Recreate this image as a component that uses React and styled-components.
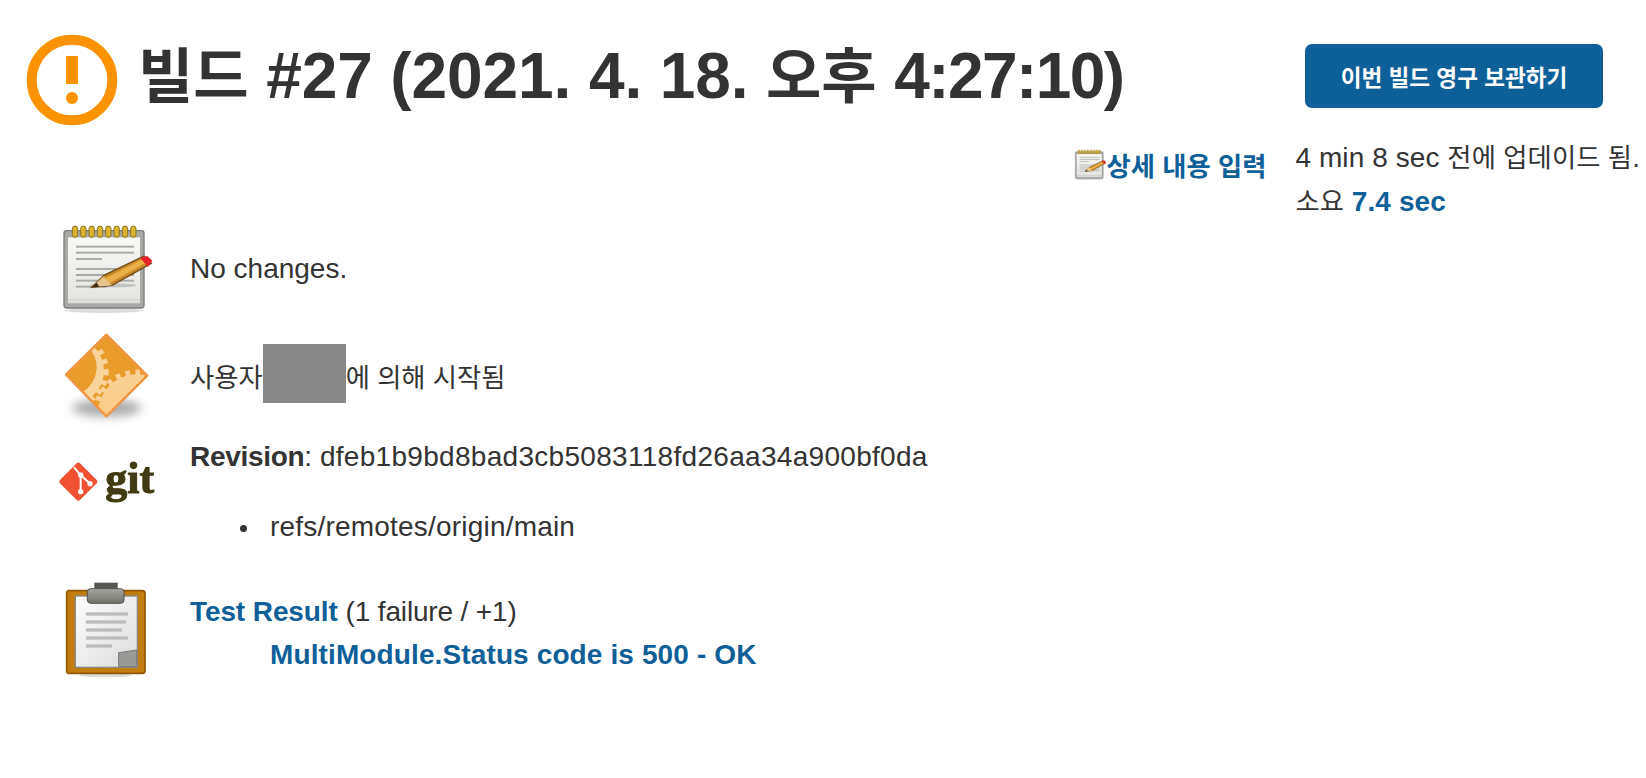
import React from 'react'
import styled, { createGlobalStyle } from 'styled-components'

const GlobalStyle = createGlobalStyle`
	html, body {
		margin: 0;
		padding: 0;
		background: #fff;
	}
	body {
		font-family: 'Liberation Sans', 'Noto Sans CJK KR', sans-serif;
		color: #333;
	}
`

const blue = '#0f5f99'

const WarningIcon = () => (
	<svg width="92" height="92" viewBox="0 0 92 92">
		<circle cx="46" cy="46" r="40.3" fill="none" stroke="#ff9200" strokeWidth="10" />
		<rect x="40" y="22" width="12" height="28" fill="#ff9200" />
		<circle cx="46" cy="64" r="6" fill="#ff9200" />
	</svg>
)

const Soft = () => (
	<defs>
		<filter id="soft" x="-10%" y="-10%" width="120%" height="120%">
			<feGaussianBlur stdDeviation="2" />
		</filter>
		<filter id="shadow" x="-30%" y="-80%" width="160%" height="260%">
			<feGaussianBlur stdDeviation="14" />
		</filter>
		<linearGradient id="clip" x1="0" y1="0" x2="0" y2="1">
			<stop offset="0" stopColor="#a5a69f" />
			<stop offset="1" stopColor="#6f716b" />
		</linearGradient>
		<linearGradient id="paper" x1="0" y1="0" x2="1" y2="1">
			<stop offset="0" stopColor="#fdfdfd" />
			<stop offset="1" stopColor="#dcdcdc" />
		</linearGradient>
		<linearGradient id="gear" x1="0" y1="0" x2="0" y2="1">
			<stop offset="0" stopColor="#f9d095" />
			<stop offset="1" stopColor="#fcc77c" />
		</linearGradient>
		<linearGradient id="pad" x1="0" y1="0" x2="0" y2="1">
			<stop offset="0" stopColor="#f8f8f7" />
			<stop offset="1" stopColor="#e4e4e2" />
		</linearGradient>
		<clipPath id="diamond">
			<polygon points="199,20 322,143 199,265 78,140" />
		</clipPath>
	</defs>
)

const NotepadArt = () => (
	<g filter="url(#soft)">
		<ellipse cx="192" cy="302" rx="118" ry="7" fill="#ddd" />
		<rect x="72" y="62" width="240" height="232" rx="8" fill="#a9aaa6" stroke="#7c7c7c" strokeWidth="4" />
		<rect x="84" y="82" width="216" height="186" fill="url(#pad)" />
		<rect x="84" y="268" width="216" height="12" fill="#dededc" />
		{[105, 130, 155, 180, 205, 230, 255, 280].map(x => (
			<rect key={x} x={x - 8} y="48" width="16" height="34" rx="8" fill="#d9b32f" stroke="#8b7420" strokeWidth="3" />
		))}
		{[[110, 282], [128, 282], [147, 186], [177, 282], [195, 282], [212, 282], [230, 200]].map(([y, x2]) => (
			<rect key={y} x="108" y={y - 3} width={x2 - 108} height="6" fill="#aaaaa8" />
		))}
		<ellipse cx="220" cy="226" rx="70" ry="6" fill="#999" opacity="0.5" />
		<polygon points="155,232 192,196 312,138 334,160 216,226" fill="#c98a2c" stroke="#6f4a17" strokeWidth="4" />
		<polygon points="195,206 310,146 318,158 210,218" fill="#eab04a" />
		<polygon points="155,232 190,199 216,226" fill="#e8c48c" />
		<polygon points="155,232 170,218 178,230" fill="#3a2a14" />
		<polygon points="300,143 322,138 337,152 324,171" fill="#e8242c" />
	</g>
)

const NotepadIcon = () => (
	<svg width="130" height="110" viewBox="0 0 390 330">
		<Soft />
		<NotepadArt />
	</svg>
)

const SmallNotepad = () => (
	<svg width="33" height="31" viewBox="60 40 285 265">
		<Soft />
		<NotepadArt />
	</svg>
)

const GearIcon = () => (
	<svg width="130" height="110" viewBox="0 0 390 330">
		<Soft />
		<ellipse cx="200" cy="240" rx="104" ry="26" fill="#888" opacity="0.7" filter="url(#shadow)" />
		<g filter="url(#soft)">
			<g clipPath="url(#diamond)">
				<rect x="70" y="10" width="260" height="260" fill="#e89c2c" />
				<circle cx="92" cy="128" r="100" fill="#f9d59d" />
				<circle cx="92" cy="128" r="106" fill="none" stroke="#f9d59d" strokeWidth="16" strokeDasharray="14 16" />
				<circle cx="84" cy="118" r="86" fill="#e89c2c" />
				<circle cx="290" cy="255" r="116" fill="url(#gear)" />
				<circle cx="290" cy="255" r="122" fill="none" stroke="#fad197" strokeWidth="16" strokeDasharray="14 16" />
			</g>
			<polygon points="199,20 322,143 199,265 78,140" fill="none" stroke="#f29542" strokeWidth="7" strokeLinejoin="round" />
		</g>
	</svg>
)

const GitIcon = () => (
	<svg width="130" height="70" viewBox="0 0 390 210">
		<defs>
			<filter id="softGit">
				<feGaussianBlur stdDeviation="1.8" />
			</filter>
		</defs>
		<g filter="url(#softGit)">
			<rect x="72.5" y="82.5" width="85" height="85" rx="8" fill="#f05133" transform="rotate(45 115 125)" />
			<path d="M102 82 L122 105 V155 M122 105 L150 131" stroke="#fff" strokeWidth="6" fill="none" />
			<circle cx="122" cy="105" r="8" fill="#fff" />
			<circle cx="122" cy="155" r="8" fill="#fff" />
			<circle cx="150" cy="131" r="8" fill="#fff" />
			<text x="196" y="160" fontFamily="'Liberation Serif', serif" fontWeight="700" fontSize="132" fill="#413a12" stroke="#413a12" strokeWidth="3">git</text>
		</g>
	</svg>
)

const ClipboardIcon = () => (
	<svg width="130" height="120" viewBox="0 0 390 360">
		<Soft />
		<g filter="url(#soft)">
			<ellipse cx="196" cy="322" rx="80" ry="6" fill="#ddd" />
			<rect x="80" y="68" width="235" height="248" rx="8" fill="#c17d11" stroke="#8f5902" strokeWidth="5" />
			<rect x="106" y="84" width="186" height="214" fill="url(#paper)" stroke="#8a8a86" strokeWidth="4" />
			{[[138, 264], [162, 258], [186, 246], [210, 264], [234, 216]].map(([y, x2]) => (
				<rect key={y} x="138" y={y - 5} width={x2 - 138} height="10" fill="#bdbdbb" />
			))}
			<polygon points="236,254 290,246 290,296 236,296" fill="#999a96" stroke="#777" strokeWidth="3" />
			<rect x="163" y="44" width="70" height="22" fill="#55574f" />
			<rect x="142" y="62" width="110" height="44" rx="10" fill="url(#clip)" stroke="#555753" strokeWidth="3" />
		</g>
	</svg>
)

const App = () => (
	<Page>
		<GlobalStyle />
		<Header>
			<HeaderIcon>
				<WarningIcon />
			</HeaderIcon>
			<Title>
				<Ko>빌드</Ko> #27 (2021. 4. 18. <Ko>오후</Ko> <Clock>4:27:10)</Clock>
			</Title>
			<KeepButton>이번 빌드 영구 보관하기</KeepButton>
		</Header>
		<MetaRow>
			<EditLink>
				<SmallNotepad />
				<Ko>상세 내용 입력</Ko>
			</EditLink>
			<Meta>
				<div>
					4 min 8 sec <Ko>전에 업데이드 됨</Ko>.
				</div>
				<div>
					<Ko>소요</Ko> <Strong>7.4 sec</Strong>
				</div>
			</Meta>
		</MetaRow>
		<Rows>
			<Row>
				<NotepadIcon />
				<Cell offset={37}>No changes.</Cell>
			</Row>
			<Row gap={8}>
				<GearIcon />
				<Cell offset={28}>
					<Ko>사용자</Ko>
					<Redacted />
					<Ko>에 의해 시작됨</Ko>
				</Cell>
			</Row>
			<Row gap={2}>
				<GitIcon />
				<Cell offset={-5}>
					<RevisionLabel>Revision</RevisionLabel>: <Hash>dfeb1b9bd8bad3cb5083118fd26aa34a900bf0da</Hash>
					<BranchList>
						<Branch>refs/remotes/origin/main</Branch>
					</BranchList>
				</Cell>
			</Row>
			<Row gap={19}>
				<ClipboardIcon />
				<Cell offset={22}>
					<TestLink>Test Result</TestLink> <TestCount>(1 failure / +1)</TestCount>
					<FailedTest>MultiModule.Status code is 500 - OK</FailedTest>
				</Cell>
			</Row>
		</Rows>
	</Page>
)

export default App

const Page = styled.div`
	width: 1646px;
	height: 778px;
	overflow: hidden;
	background: #fff;
`

const Ko = styled.span`
	font-size: 0.94em;
`

const Header = styled.div`
	display: flex;
	align-items: flex-start;
	height: 136px;
	padding: 34px 43px 0 26px;
	box-sizing: border-box;
`

const HeaderIcon = styled.div`
	flex: none;
	width: 112px;
	height: 92px;
`

const Title = styled.h1`
	flex: 1;
	margin: 0;
	font-size: 64px;
	line-height: 84px;
	font-weight: 700;
	color: #333;
	white-space: nowrap;
	letter-spacing: -0.1px;
`

const Clock = styled.span`
	letter-spacing: -1.6px;
`

const KeepButton = styled.button`
	flex: none;
	width: 298px;
	height: 64px;
	margin-top: 10px;
	border: 0;
	border-radius: 7px;
	background: ${blue};
	color: #fff;
	font-family: inherit;
	font-size: 22.6px;
	font-weight: 700;
`

const MetaRow = styled.div`
	display: flex;
	justify-content: flex-end;
	gap: 29px;
	height: 74px;
	padding-right: 6px;
`

const EditLink = styled.a`
	display: flex;
	align-items: center;
	align-self: flex-start;
	height: 46px;
	margin-top: 5px;
	color: ${blue};
	font-size: 28px;
	font-weight: 700;
`

const Meta = styled.div`
	font-size: 28px;
	line-height: 44px;
	white-space: nowrap;
	letter-spacing: 0.08px;
`

const Strong = styled.a`
	color: ${blue};
	font-weight: 700;
`

const Rows = styled.div`
	display: flex;
	flex-direction: column;
`

const Row = styled.div`
	display: flex;
	gap: 20px;
	align-items: flex-start;
	padding-left: 40px;
	margin-top: ${props => props.gap || 0}px;
	font-size: 28px;
	line-height: 44px;
`

const Cell = styled.div`
	margin-top: ${props => props.offset}px;
`

const RevisionLabel = styled.b`
	letter-spacing: -0.3px;
`

const Hash = styled.span`
	letter-spacing: 0.3px;
`

const Redacted = styled.span`
	display: inline-block;
	width: 83px;
	height: 59px;
	margin: -14px 0 -2px;
	background: #888;
	vertical-align: middle;
`

const BranchList = styled.ul`
	margin: 26px 0 0;
	padding: 0 0 0 80px;
	list-style: none;
	letter-spacing: 0.2px;
`

const Branch = styled.li`
	position: relative;

	&::before {
		content: '';
		position: absolute;
		left: -30px;
		top: 20px;
		width: 7px;
		height: 7px;
		border-radius: 50%;
		background: #333;
	}
`

const TestLink = styled.a`
	color: ${blue};
	font-weight: 700;
	letter-spacing: -0.1px;
`

const TestCount = styled.span`
	letter-spacing: -0.15px;
`

const FailedTest = styled.a`
	display: block;
	margin-top: -1px;
	padding-left: 80px;
	color: ${blue};
	font-weight: 700;
	letter-spacing: 0.12px;
`
